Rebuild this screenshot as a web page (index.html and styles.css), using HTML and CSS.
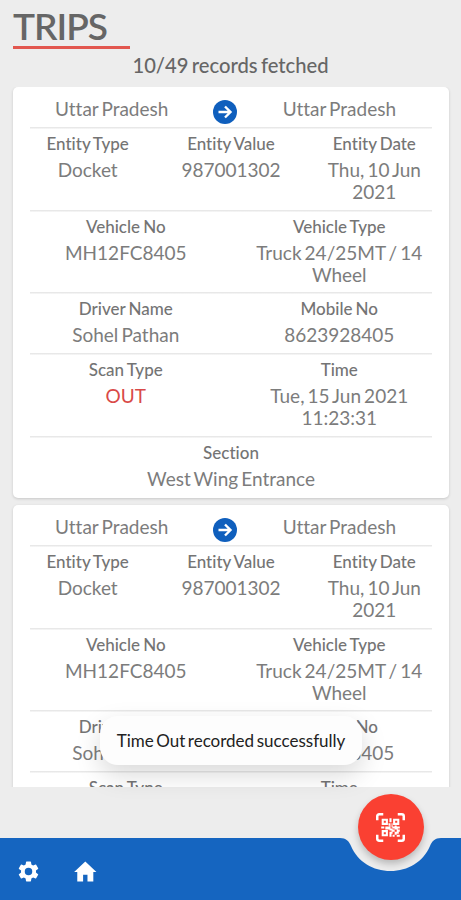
FILE: index.html
```html
<!doctype html>
<html lang="en">
  <head>
    <meta charset="UTF-8" />
    <meta name="viewport" content="width=device-width, initial-scale=1.0" />
    <title>Trips</title>
    <link rel="stylesheet" href="styles.css">
  </head>
  <body>
    <div class="app">
      <header class="header">
        <h1>TRIPS</h1>
        <p class="count">10/49 records fetched</p>
      </header>

      <main class="trips">
        <article class="card">
          <div class="route">
            <span>Uttar Pradesh</span>
            <svg class="arrow" viewBox="0 0 24 24">
              <circle cx="12" cy="12" r="12" />
              <path d="M5.5 12H17M12 6.5l5.5 5.5-5.5 5.5" />
            </svg>
            <span>Uttar Pradesh</span>
          </div>
          <div class="row three">
            <div><h2>Entity Type</h2><p>Docket</p></div>
            <div><h2>Entity Value</h2><p>987001302</p></div>
            <div><h2>Entity Date</h2><p>Thu, 10 Jun 2021</p></div>
          </div>
          <div class="row two">
            <div><h2>Vehicle No</h2><p>MH12FC8405</p></div>
            <div><h2>Vehicle Type</h2><p>Truck 24/25MT / 14 Wheel</p></div>
          </div>
          <div class="row two">
            <div><h2>Driver Name</h2><p>Sohel Pathan</p></div>
            <div><h2>Mobile No</h2><p>8623928405</p></div>
          </div>
          <div class="row two">
            <div><h2>Scan Type</h2><p class="out">OUT</p></div>
            <div><h2>Time</h2><p>Tue, 15 Jun 2021 11:23:31</p></div>
          </div>
          <div class="row">
            <div><h2>Section</h2><p>West Wing Entrance</p></div>
          </div>
        </article>

        <article class="card">
          <div class="route">
            <span>Uttar Pradesh</span>
            <svg class="arrow" viewBox="0 0 24 24">
              <circle cx="12" cy="12" r="12" />
              <path d="M5.5 12H17M12 6.5l5.5 5.5-5.5 5.5" />
            </svg>
            <span>Uttar Pradesh</span>
          </div>
          <div class="row three">
            <div><h2>Entity Type</h2><p>Docket</p></div>
            <div><h2>Entity Value</h2><p>987001302</p></div>
            <div><h2>Entity Date</h2><p>Thu, 10 Jun 2021</p></div>
          </div>
          <div class="row two">
            <div><h2>Vehicle No</h2><p>MH12FC8405</p></div>
            <div><h2>Vehicle Type</h2><p>Truck 24/25MT / 14 Wheel</p></div>
          </div>
          <div class="row two">
            <div><h2>Driver Name</h2><p>Sohel Pathan</p></div>
            <div><h2>Mobile No</h2><p>8623928405</p></div>
          </div>
          <div class="row two">
            <div><h2>Scan Type</h2></div>
            <div><h2>Time</h2></div>
          </div>
        </article>
      </main>

      <div class="toast">Time Out recorded successfully</div>

      <nav class="bottom-bar">
        <svg class="bar-shape" viewBox="0 0 461 62">
          <path d="M0 0H340C346 0 349 3 351 8C358 24 373 33 390.500 33C408 33 423 24 430 8C432 3 435 0 441 0H461V62H0Z" />
        </svg>
        <a class="nav-link" href="#" aria-label="Settings">
          <svg viewBox="0 0 24 24">
            <path d="M19.140 12.940c.04-.3.060-.610.060-.940s-.020-.640-.070-.940l2.030-1.580a.49.49 0 0 0 .120-.610l-1.920-3.320a.49.49 0 0 0-.590-.220l-2.390.960a7 7 0 0 0-1.620-.940l-.360-2.540a.48.48 0 0 0-.480-.410h-3.840a.48.48 0 0 0-.470.410l-.360 2.540a7.300 7.300 0 0 0-1.620.940l-2.390-.960a.48.48 0 0 0-.590.220L2.740 8.870a.48.48 0 0 0 .120.610l2.030 1.580a6.300 6.300 0 0 0-.020 1.880l-2.030 1.580a.49.49 0 0 0-.120.610l1.920 3.320c.12.220.370.290.590.220l2.390-.960c.5.380 1.030.7 1.620.940l.360 2.540c.05.240.240.410.480.410h3.840c.24 0 .440-.170.470-.410l.360-2.540a7.300 7.300 0 0 0 1.620-.940l2.390.960c.22.080.470 0 .590-.220l1.920-3.320a.48.48 0 0 0-.120-.610zM12 15.600a3.600 3.600 0 1 1 0-7.200 3.600 3.600 0 0 1 0 7.200z" />
          </svg>
        </a>
        <a class="nav-link" href="#" aria-label="Home">
          <svg viewBox="0 0 24 24">
            <path d="M9.700 21.500v-6.500h4.200v6.500h5.600v-9h3L11.800 2.500 1.100 12.500h3v9z" />
          </svg>
        </a>
        <button class="scan" aria-label="Scan QR code">
          <svg viewBox="0 0 28 28">
            <path class="frame" d="M1.200 7V3.200q0-2 2-2H7M21 1.200h3.800q2 0 2 2V7M26.800 21v3.800q0 2-2 2H21M7 26.800H3.200q-2 0-2-2V21" />
            <path class="finder" d="M6.500 6.500h4v4h-4zM17.500 6.500h4v4h-4zM6.500 17.500h4v4h-4z" />
            <path class="dots" d="M13 5h2v4h-2zM12 10h2v2h-2zM15 10h1v3h2v-1h2v1h3v2h-2v1h-3v-1h-2v-1h-1zM5 13h3v2H5zM9 13h4v-1h1v3h2v2h-3v-1h-4zM13 18h2v-2h3v2h-2v2h-1v3h-2zM18 18h2v-2h3v2h-1v2h-2v1h-2zM16 21h2v2h-2zM20 21h3v2h-3z" />
          </svg>
        </button>
      </nav>
    </div>
  </body>
</html>
```
FILE: styles.css
```css
* {
  box-sizing: border-box;
}
body {
  margin: 0;
  background: #ededed;
  font-family: Lato, 'Liberation Sans', sans-serif;
  font-variant-ligatures: none;
  word-spacing: -1.8px;
  color: #7c7c7c;
}
h1,
h2,
p {
  margin: 0;
}
.app {
  position: relative;
  display: flex;
  flex-direction: column;
  height: 900px;
  overflow: hidden;
}
.header {
  height: 87px;
  padding: 3px 13px 0;
}
h1 {
  width: 117px;
  height: 46px;
  border-bottom: 3px solid #e2574f;
  font-size: 37px;
  font-weight: 600;
  line-height: 46px;
  letter-spacing: -1px;
  color: #666;
}
.count {
  margin-top: 3px;
  text-align: center;
  font-size: 20.200px;
  font-weight: 500;
  line-height: 27px;
  color: #666;
}
.trips {
  height: 700px;
  padding: 0 12px 0 13px;
  overflow: hidden;
}
.card {
  height: 411px;
  margin-bottom: 7px;
  padding: 0 3px;
  background: #fff;
  border-radius: 5px;
  box-shadow: 0 1px 3px rgba(0, 0, 0, 0.16);
}
.route {
  display: flex;
  justify-content: space-between;
  height: 40px;
  padding: 11px 50px 0 39px;
  font-size: 19px;
  line-height: 22px;
  white-space: nowrap;
}
.arrow {
  width: 24px;
  height: 24px;
  margin: 2px 2px 0 0;
}
.arrow circle {
  fill: #0f5fbd;
}
.arrow path {
  fill: none;
  stroke: #fff;
  stroke-width: 2.4;
}
.row {
  display: grid;
  padding: 6px 0 6.300px;
  background: linear-gradient(#e8e8e8, #e8e8e8) 14px 0 / 402px 1.500px no-repeat;
  text-align: center;
}
.row > div {
  padding: 0 8px;
}
.three {
  grid-template-columns: repeat(3, 1fr);
}
.two {
  grid-template-columns: repeat(2, 1fr);
  padding-left: 3px;
}
.row h2 {
  margin-bottom: 4px;
  font-size: 17px;
  font-weight: 500;
  line-height: 22px;
  word-spacing: -1.200px;
  color: #747474;
}
.row p {
  font-size: 19px;
  line-height: 22.200px;
}
.row .out {
  color: #d94a48;
}
.toast {
  position: absolute;
  top: 716px;
  left: 100px;
  width: 262px;
  height: 49px;
  border-radius: 18px;
  background: #fdfdfd;
  box-shadow: 0 10px 26px rgba(0, 0, 0, 0.15);
  font-size: 17px;
  line-height: 49px;
  text-align: center;
  white-space: nowrap;
  color: #222;
}
.bottom-bar {
  position: relative;
  display: flex;
  gap: 32px;
  height: 62px;
  margin-top: auto;
  padding: 21px 16px 0;
}
.bar-shape {
  position: absolute;
  inset: 0;
  width: 461px;
  height: 62px;
  fill: #1565c0;
}
.nav-link {
  position: relative;
  width: 25px;
  height: 25px;
}
.nav-link svg {
  display: block;
  width: 25px;
  height: 25px;
  fill: #fff;
}
.scan {
  position: absolute;
  top: -44px;
  left: 358px;
  display: grid;
  place-items: center;
  width: 66px;
  height: 66px;
  padding: 0 1px 0 0;
  border: 0;
  border-radius: 50%;
  background: #fa4032;
  box-shadow: 0 4px 7px rgba(0, 0, 0, 0.22);
}
.scan svg {
  width: 29px;
  height: 29px;
}
.frame,
.finder {
  fill: none;
  stroke: #fff;
  stroke-width: 2;
}
.frame {
  stroke-width: 2.4;
}
.dots {
  fill: #fff;
}
```
